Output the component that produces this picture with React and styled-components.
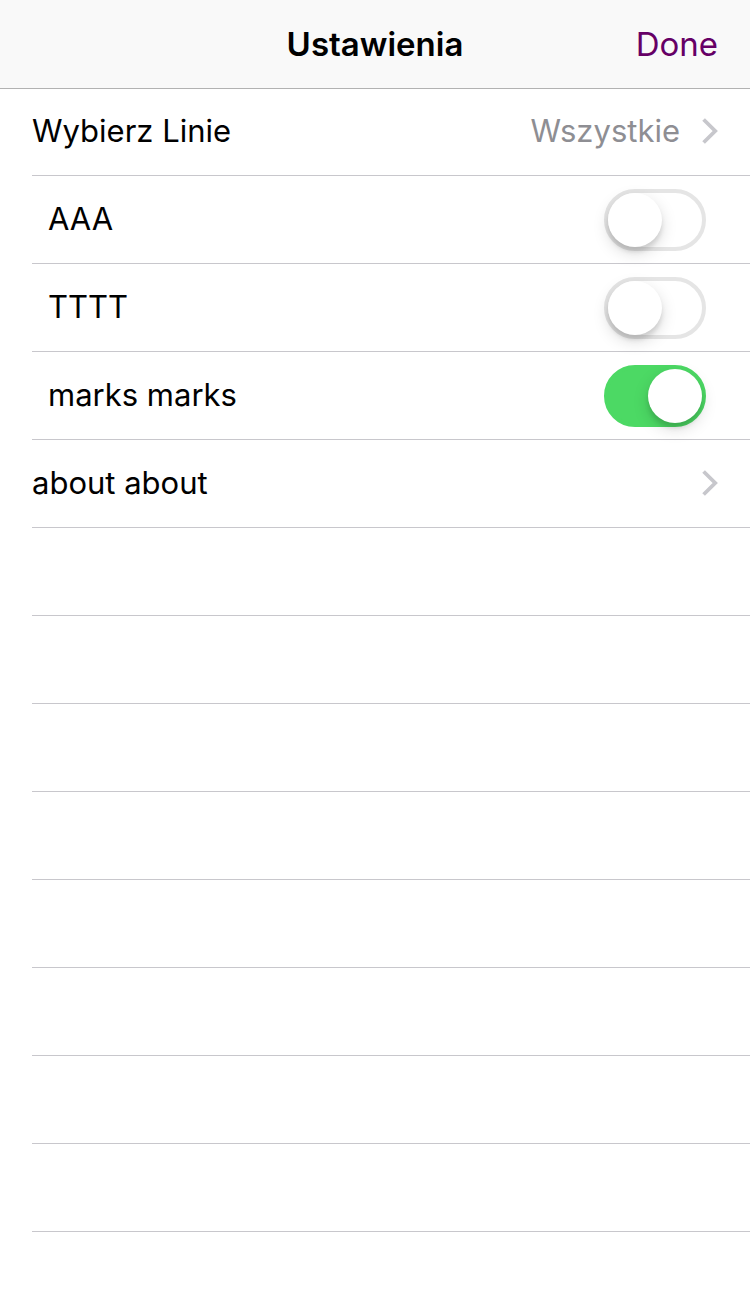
import React, { useState } from "react";
import styled, { createGlobalStyle, css } from "styled-components";

const GlobalStyle = createGlobalStyle`
  *, *::before, *::after { box-sizing: border-box; }
  body {
    margin: 0;
    background: #fff;
    color: #000;
    font-family: Inter, "Noto Sans", "Liberation Sans", sans-serif;
    font-size: 31px;
    line-height: 40px;
  }
`;

const Page = styled.div`
  min-height: 100vh;
`;

const NavBar = styled.header`
  display: grid;
  grid-template-columns: 1fr auto 1fr;
  align-items: center;
  height: 88px;
  padding: 0 32px;
  background: #f9f9f9;
  box-shadow: 0 1px 0 #b2b2b2;
`;

const Title = styled.h1`
  grid-column: 2;
  margin: 0;
  font-size: 33px;
  font-weight: 600;
  line-height: 40px;
`;

const DoneButton = styled.button`
  justify-self: end;
  padding: 0;
  border: 0;
  background: none;
  color: #660066;
  font: inherit;
  font-size: 33px;
  line-height: 40px;
  cursor: pointer;
`;

const List = styled.ul`
  margin: 0;
  padding: 0 0 0 32px;
  list-style: none;
`;

const Row = styled.li`
  height: 88px;
  box-shadow: inset 0 -1px 0 #c8c7cc;
`;

const rowContent = css`
  display: flex;
  align-items: center;
  width: 100%;
  height: 100%;
`;

const LinkRow = styled.button`
  ${rowContent}
  gap: 22px;
  padding: 0 32px 2px 0;
  border: 0;
  background: none;
  color: inherit;
  font: inherit;
  text-align: left;
  cursor: pointer;
`;

const SwitchRow = styled.div`
  ${rowContent}
  padding: 0 44px 0 16px;
`;

const RowText = styled.span`
  flex: 1;
`;

const SwitchLabel = styled.label`
  flex: 1;
  padding-bottom: 2px;
`;

const RowValue = styled.span`
  color: #8e8e93;
`;

const Switch = styled.input`
  appearance: none;
  flex: none;
  width: 102px;
  height: 62px;
  margin: 0;
  padding: 0;
  border: 4px solid #e5e5e5;
  border-radius: 31px;
  background: #fff;
  cursor: pointer;

  &::before {
    content: "";
    display: block;
    width: 54px;
    height: 54px;
    border-radius: 50%;
    background: #fff;
    box-shadow: 0 6px 16px rgba(0, 0, 0, 0.15), 0 5px 4px rgba(0, 0, 0, 0.1);
  }

  &:checked {
    border-color: #4cd964;
    background: #4cd964;
  }

  &:checked::before {
    margin-left: auto;
  }
`;

const ChevronIcon = styled.svg`
  display: block;
  flex: none;
  width: 16px;
  height: 26px;
  fill: none;
  stroke: #c7c7cc;
  stroke-width: 3.8;
`;

function Chevron() {
  return (
    <ChevronIcon viewBox="0 0 16 26" aria-hidden="true">
      <path d="M1.6 1.5 13.2 13 1.6 24.5" />
    </ChevronIcon>
  );
}

function NavigationItem({ label, value }) {
  return (
    <Row>
      <LinkRow type="button">
        <RowText>{label}</RowText>
        {value && <RowValue>{value}</RowValue>}
        <Chevron />
      </LinkRow>
    </Row>
  );
}

function SwitchItem({ id, label, initial = false }) {
  const [on, setOn] = useState(initial);
  return (
    <Row>
      <SwitchRow>
        <SwitchLabel htmlFor={id}>{label}</SwitchLabel>
        <Switch
          id={id}
          type="checkbox"
          role="switch"
          checked={on}
          onChange={(event) => setOn(event.target.checked)}
        />
      </SwitchRow>
    </Row>
  );
}

const EMPTY_ROWS = 8;

export default function App() {
  return (
    <Page>
      <GlobalStyle />
      <NavBar>
        <Title>Ustawienia</Title>
        <DoneButton type="button">Done</DoneButton>
      </NavBar>
      <main>
        <List>
          <NavigationItem label="Wybierz Linie" value="Wszystkie" />
          <SwitchItem id="switch-aaa" label="AAA" />
          <SwitchItem id="switch-tttt" label="TTTT" />
          <SwitchItem id="switch-marks" label="marks marks" initial />
          <NavigationItem label="about about" />
          {Array.from({ length: EMPTY_ROWS }, (_, index) => (
            <Row key={index} aria-hidden="true" />
          ))}
        </List>
      </main>
    </Page>
  );
}
